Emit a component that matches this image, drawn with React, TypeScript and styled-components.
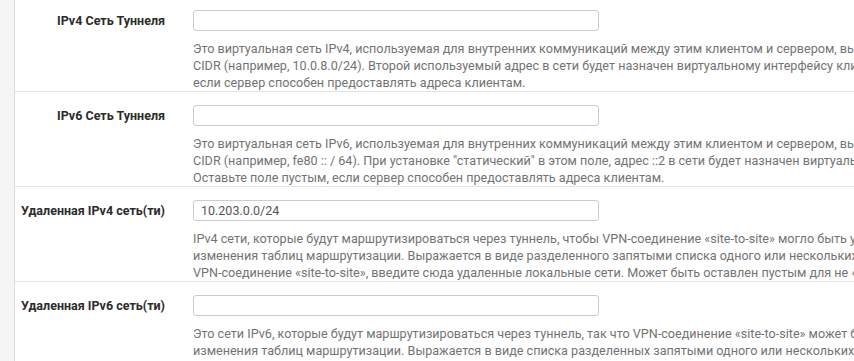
import React from 'react';
import styled, { createGlobalStyle } from 'styled-components';

const GlobalStyle = createGlobalStyle`
  html, body {
    margin: 0;
    padding: 0;
    background: #ffffff;
    overflow: hidden;
  }
  body {
    font-family: Roboto, "Liberation Sans", sans-serif;
  }
`;

const Page = styled.div`
  display: flex;
  min-height: 361px;
`;

const Gutter = styled.div`
  width: 14px;
  flex: none;
  background: #f5f5f5;
  border-right: 1px solid #dddddd;
`;

const Form = styled.div`
  flex: 1;
  min-width: 0;
  margin-top: -3px;
`;

const Row = styled.div`
  display: flex;
  border-bottom: 1px solid #e3e3e3;
  padding-top: 13px;
`;

const Label = styled.label`
  width: 165px;
  flex: none;
  box-sizing: border-box;
  padding-right: 15px;
  text-align: right;
  font-size: 12.5px;
  font-weight: 700;
  line-height: 21px;
  color: #2b2b2b;
`;

const Field = styled.div`
  flex: 1;
  min-width: 0;
  padding-left: 13px;
  overflow: hidden;
`;

const Input = styled.input`
  display: block;
  box-sizing: border-box;
  width: 406px;
  height: 21px;
  margin: 0;
  padding: 0 7px;
  border: 1px solid #cccccc;
  border-radius: 3px;
  background: #ffffff;
  font-family: Roboto, "Liberation Sans", sans-serif;
  font-size: 12.5px;
  color: #555555;
  outline: none;
`;

const Help = styled.div`
  margin-top: 9px;
  font-size: 12.6px;
  line-height: 17px;
  color: #737373;
  white-space: nowrap;
`;

type Entry = { label: string; value?: string; help: string[] };

const entries: Entry[] = [
  {
    label: 'IPv4 Сеть Туннеля',
    help: [
      'Это виртуальная сеть IPv4, используемая для внутренних коммуникаций между этим клиентом и сервером, выраженная с использованием нотации',
      'CIDR (например, 10.0.8.0/24). Второй используемый адрес в сети будет назначен виртуальному интерфейсу клиента. Оставьте поле пустым,',
      'если сервер способен предоставлять адреса клиентам.',
    ],
  },
  {
    label: 'IPv6 Сеть Туннеля',
    help: [
      'Это виртуальная сеть IPv6, используемая для внутренних коммуникаций между этим клиентом и сервером, выраженная с использованием нотации',
      'CIDR (например, fe80 :: / 64). При установке "статический" в этом поле, адрес ::2 в сети будет назначен виртуальному интерфейсу клиента.',
      'Оставьте поле пустым, если сервер способен предоставлять адреса клиентам.',
    ],
  },
  {
    label: 'Удаленная IPv4 сеть(ти)',
    value: '10.203.0.0/24',
    help: [
      'IPv4 сети, которые будут маршрутизироваться через туннель, чтобы VPN-соединение «site-to-site» могло быть установлено без ручного',
      'изменения таблиц маршрутизации. Выражается в виде разделенного запятыми списка одного или нескольких сетей CIDR. Если это',
      'VPN-соединение «site-to-site», введите сюда удаленные локальные сети. Может быть оставлен пустым для не «site-to-site» VPN.',
    ],
  },
  {
    label: 'Удаленная IPv6 сеть(ти)',
    help: [
      'Это сети IPv6, которые будут маршрутизироваться через туннель, так что VPN-соединение «site-to-site» может быть установлено без ручного',
      'изменения таблиц маршрутизации. Выражается в виде списка разделенных запятыми одного или нескольких сетей IP/PREFIX. Если это',
      'VPN-соединение «site-to-site», введите сюда удаленные сети IPv6. Может быть оставлен пустым для не «site-to-site» VPN.',
    ],
  },
];

export default function App() {
  return (
    <>
      <GlobalStyle />
      <Page>
        <Gutter />
        <Form>
          {entries.map((e) => (
            <Row key={e.label}>
              <Label>{e.label}</Label>
              <Field>
                <Input type="text" defaultValue={e.value || ''} />
                <Help>
                  {e.help.map((line, i) => (
                    <div key={i}>{line}</div>
                  ))}
                </Help>
              </Field>
            </Row>
          ))}
        </Form>
      </Page>
    </>
  );
}
